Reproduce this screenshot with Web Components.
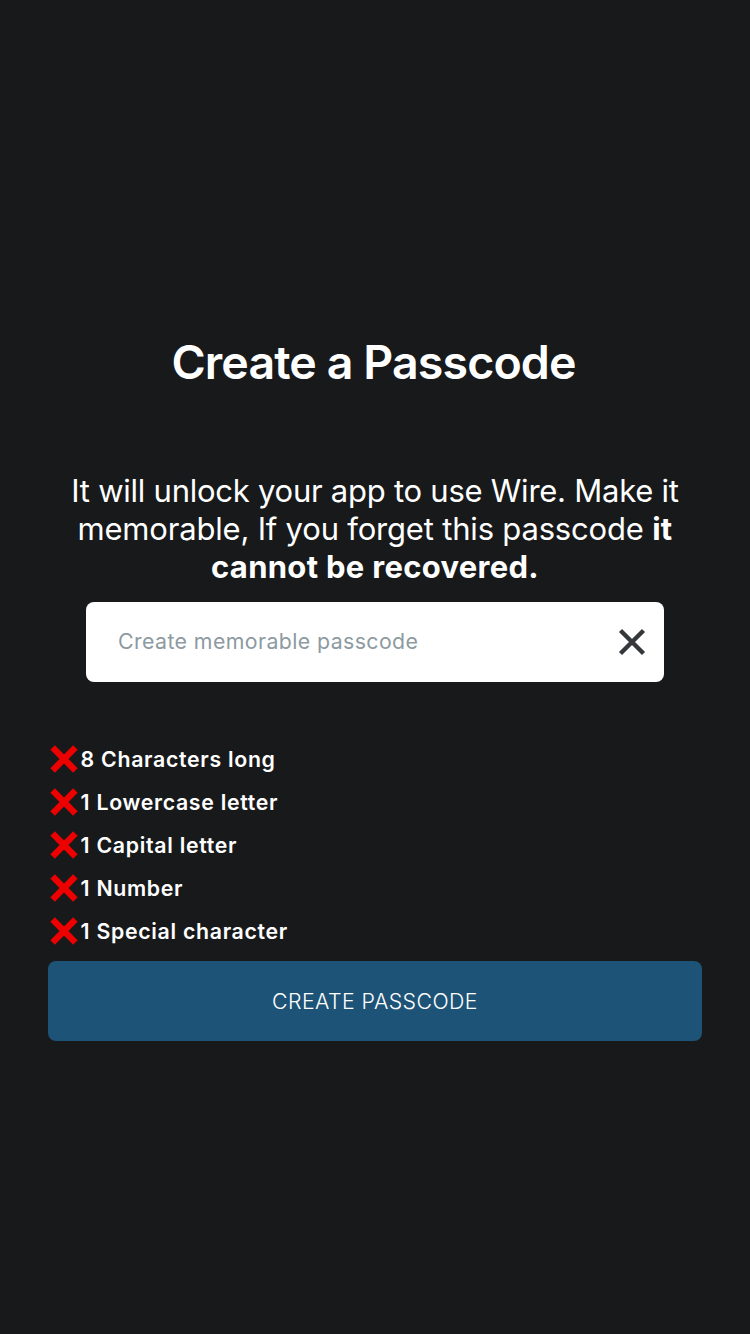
<!DOCTYPE html>
<html lang="en">
<head>
<meta charset="utf-8">
<title>Create a Passcode</title>
<style>
  html, body { margin: 0; height: 100%; background: #18191b; }
</style>
</head>
<body>
<passcode-screen>
  <screen-title>Create a Passcode</screen-title>
  <screen-hint></screen-hint>
  <passcode-field>Create memorable passcode</passcode-field>
  <rule-list>
    <rule-item>8 Characters long</rule-item>
    <rule-item>1 Lowercase letter</rule-item>
    <rule-item>1 Capital letter</rule-item>
    <rule-item>1 Number</rule-item>
    <rule-item>1 Special character</rule-item>
  </rule-list>
  <action-button>CREATE PASSCODE</action-button>
</passcode-screen>
<script>
const define = (name, html) => customElements.define(name, class extends HTMLElement {
  constructor() {
    super();
    this.attachShadow({ mode: 'open' }).innerHTML = html;
  }
});

define('passcode-screen', `
  <style>
    :host { display: flex; flex-direction: column; box-sizing: border-box; width: 750px; height: 1334px;
      padding: 333px 48px 0; background: #18191b; color: #fff; font-family: Inter, "Noto Sans", sans-serif; }
  </style>
  <slot></slot>`);

define('screen-title', `
  <style>
    :host { display: block; text-align: center; font-size: 46.5px; font-weight: 600; line-height: 58px;
      letter-spacing: -0.89px; margin-bottom: 81px; padding-right: 3px; }
  </style>
  <slot></slot>`);

define('screen-hint', `
  <style>
    :host { display: block; text-align: center; font-size: 31px; line-height: 38px; white-space: nowrap; margin-bottom: 16px; }
    div { letter-spacing: -0.25px; }
    .second { letter-spacing: -0.19px; }
    b { font-weight: 700; letter-spacing: 0.3px; }
  </style>
  <div>It will unlock your app to use Wire. Make it</div>
  <div class="second">memorable, If you forget this passcode <b>it</b></div>
  <div><b>cannot be recovered.</b></div>`);

define('passcode-field', `
  <style>
    :host { display: flex; align-items: center; justify-content: space-between; box-sizing: border-box; height: 80px;
      margin: 0 38px 55px; padding: 0 18px 0 32px; border-radius: 8px; background: #fff; color: #8d9aa1;
      font-size: 21.3px; line-height: 28px; letter-spacing: 0.41px; }
    span { padding-bottom: 2px; }
    svg { display: block; width: 28px; height: 28px; }
  </style>
  <span><slot></slot></span>
  <svg viewBox="0 0 28 28"><path d="M2.5 2.5 25.5 25.5M25.5 2.5 2.5 25.5" fill="none" stroke="#34383b" stroke-width="4.4"/></svg>`);

define('rule-list', `
  <style>:host { display: flex; flex-direction: column; margin-bottom: 9px; }</style>
  <slot></slot>`);

define('rule-item', `
  <style>
    :host { display: flex; align-items: center; height: 43px; padding-left: 2px; gap: 2.5px;
      font-size: 21.3px; font-weight: 600; line-height: 28px; letter-spacing: 0.68px; word-spacing: 0.2px; }
    svg { display: block; width: 28px; height: 28px; }
  </style>
  <svg viewBox="0 0 28 28"><path d="M2.6 2.6 25.4 25.4M25.4 2.6 2.6 25.4" fill="none" stroke="#ed0000" stroke-width="6.4"/></svg>
  <span><slot></slot></span>`);

define('action-button', `
  <style>
    :host { display: flex; align-items: center; justify-content: center; height: 80px; border-radius: 8px;
      background: #1e5378; font-size: 21.3px; font-weight: 300; line-height: 28px; letter-spacing: 0.46px; }
  </style>
  <span><slot></slot></span>`);
</script>
</body>
</html>
